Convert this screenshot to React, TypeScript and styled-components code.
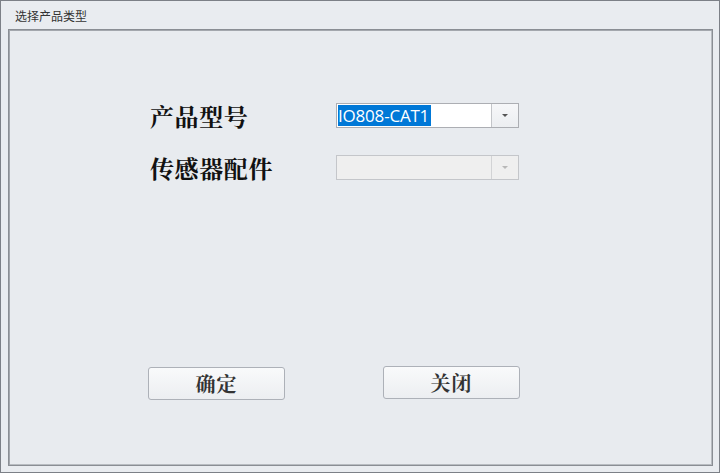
import React from "react";
import styled, { createGlobalStyle } from "styled-components";

const Global = createGlobalStyle`
  html, body { margin: 0; padding: 0; background: #e9ecf0; }
  * { box-sizing: border-box; }
`;

const Window = styled.div`
  width: 720px;
  height: 473px;
  border: 1px solid #7c8087;
  background: #e9ecf0;
  display: flex;
  flex-direction: column;
  padding: 0 6px 6px 7px;
`;

const Title = styled.div`
  height: 28px;
  padding: 7px 0 0 7px;
  font-family: "Noto Sans CJK SC", "Liberation Sans", sans-serif;
  font-size: 12px;
  line-height: 16px;
  color: #333;
`;

const Panel = styled.div`
  flex: 1;
  border: 1px solid #8a8e94;
  box-shadow: inset 1px 1px 0 #a3a7ad, inset -1px -1px 0 #b8bcc1;
  background: #e8ebef;
  display: flex;
  flex-direction: column;
  padding: 73px 0 0 141px;
`;

const Form = styled.div`
  display: grid;
  grid-template-columns: 186px 183px;
  grid-auto-rows: 25px;
  row-gap: 27px;
  align-items: center;
`;

const Label = styled.div`
  font-family: "Noto Serif CJK SC", "Noto Sans CJK SC", serif;
  font-weight: 700;
  font-size: 24px;
  line-height: 25px;
  color: #111;
  letter-spacing: 0.6px;
`;

const Combo = styled.div<{ $disabled?: boolean }>`
  height: 25px;
  display: flex;
  border: 1px solid ${(p) => (p.$disabled ? "#c4c6ca" : "#acaeb3")};
  background: ${(p) => (p.$disabled ? "#efefef" : "#ffffff")};
`;

const ComboText = styled.div`
  flex: 1;
  padding: 1px 0 0 1px;
  font-family: "Open Sans", "Noto Sans", sans-serif;
  font-size: 17px;
  line-height: 21px;
`;

const Selected = styled.span`
  display: inline-block;
  background: #0078d7;
  color: #fff;
  width: 93px;
  height: 21px;
  white-space: nowrap;
  overflow: hidden;
  letter-spacing: -0.2px;
`;

const DropBtn = styled.div<{ $disabled?: boolean }>`
  width: 27px;
  border-left: 1px solid ${(p) => (p.$disabled ? "#d2d3d5" : "#c3c5c9")};
  background: ${(p) =>
    p.$disabled ? "#efefef" : "linear-gradient(#f6f7f9, #eceef1)"};
  display: flex;
  align-items: center;
  justify-content: center;
`;

const Arrow = styled.div<{ $disabled?: boolean }>`
  width: 0;
  height: 0;
  border-left: 3px solid transparent;
  border-right: 3px solid transparent;
  border-top: 3px solid ${(p) => (p.$disabled ? "#b8b8b8" : "#555")};
`;

const Buttons = styled.div`
  margin-top: 186px;
  display: flex;
  align-items: flex-start;
  gap: 98px;
  margin-left: -2px;
`;

const Button = styled.button<{ $shift?: number }>`
  width: 137px;
  height: 33px;
  margin-top: ${(p) => p.$shift ?? 0}px;
  border: 1px solid #adb1b8;
  border-radius: 3px;
  background: linear-gradient(#f9fafb, #eceef1);
  font-family: "Noto Serif CJK SC", "Noto Sans CJK SC", serif;
  font-weight: 700;
  font-size: 20px;
  line-height: 31px;
  color: #333;
  padding: 0;
  letter-spacing: 1px;
`;

export default function App() {
  return (
    <>
      <Global />
      <Window>
        <Title>选择产品类型</Title>
        <Panel>
          <Form>
            <Label>产品型号</Label>
            <Combo>
              <ComboText>
                <Selected>IO808-CAT1</Selected>
              </ComboText>
              <DropBtn>
                <Arrow />
              </DropBtn>
            </Combo>
            <Label>传感器配件</Label>
            <Combo $disabled>
              <ComboText />
              <DropBtn $disabled>
                <Arrow $disabled />
              </DropBtn>
            </Combo>
          </Form>
          <Buttons>
            <Button $shift={1}>确定</Button>
            <Button>关闭</Button>
          </Buttons>
        </Panel>
      </Window>
    </>
  );
}
